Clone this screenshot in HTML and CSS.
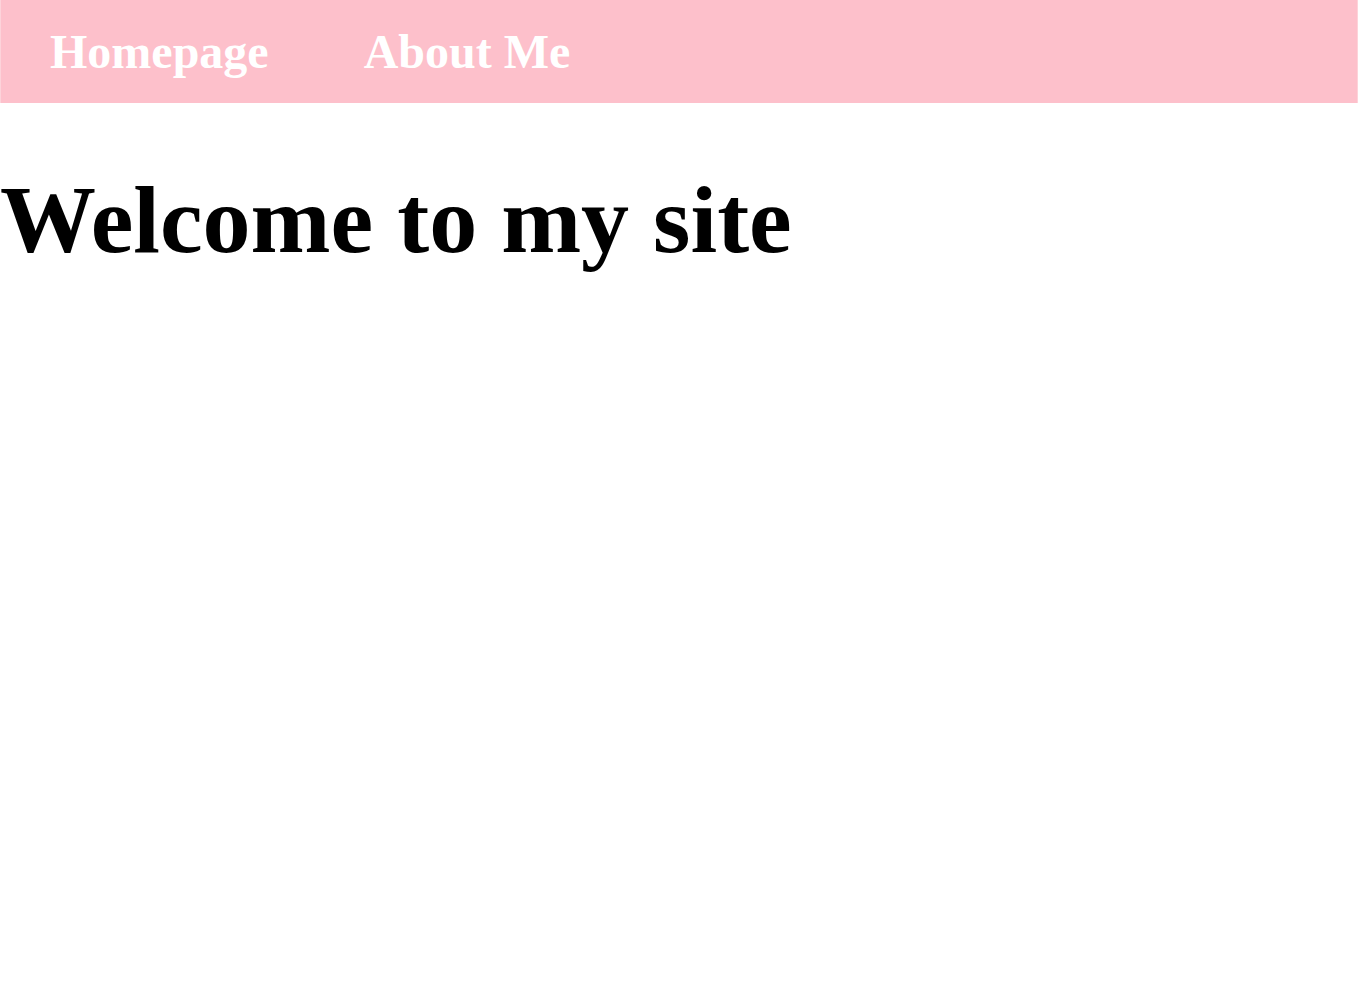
FILE: index.html
```html
<!DOCTYPE html>
<html lang="en">
<head>
<meta charset="utf-8">
<title>Welcome</title>
<link rel="stylesheet" href="styles.css">
</head>
<body>
<nav class="topnav">
  <a class="nav-link" href="#">Homepage</a>
  <a class="nav-link" href="#">About Me</a>
</nav>
<h1 class="welcome">Welcome to my site</h1>
</body>
</html>
```
FILE: styles.css
```css
html, body {
  margin: 0;
  padding: 0;
  background: #ffffff;
  font-family: "Liberation Serif", "Times New Roman", serif;
}
.topnav {
  box-sizing: border-box;
  height: 103px;
  display: flex;
  align-items: center;
  gap: 95px;
  padding: 0 0 0 49px;
  background: #fdc0cb;
  border-left: 1px solid #fdd3da;
  border-right: 1px solid #fdd3da;
}
.nav-link {
  color: #ffffff;
  font-size: 48px;
  font-weight: bold;
  text-decoration: none;
}
.welcome {
  margin: 61px 0 64px;
  font-size: 96px;
  font-weight: bold;
  color: #000000;
}
```
